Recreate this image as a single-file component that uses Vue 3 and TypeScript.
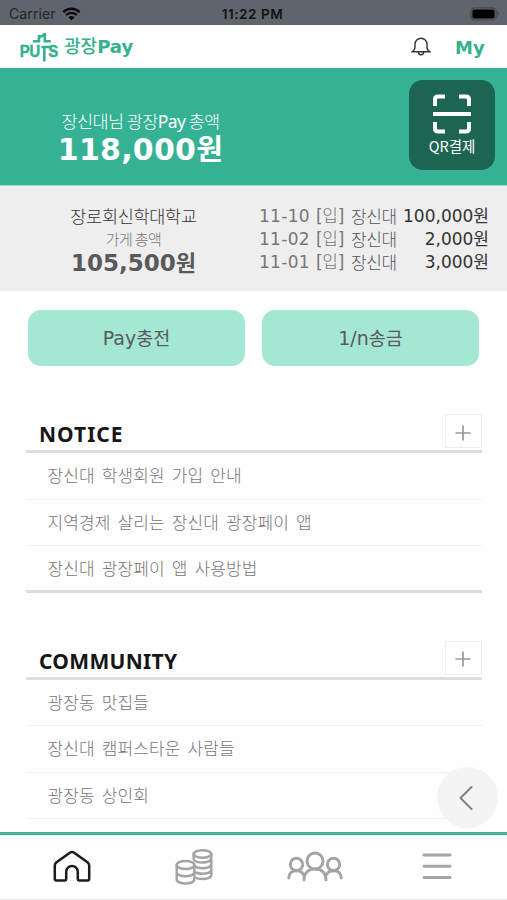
<script setup lang="ts">
interface Transaction {
  date: string
  name: string
  amount: string
}
interface Board {
  id: string
  title: string
  posts: string[]
}

const transactions: Transaction[] = [
  { date: '11-10', name: '장신대', amount: '100,000' },
  { date: '11-02', name: '장신대', amount: '2,000' },
  { date: '11-01', name: '장신대', amount: '3,000' },
]

const boards: Board[] = [
  {
    id: 'notice',
    title: 'NOTICE',
    posts: ['장신대 학생회원 가입 안내', '지역경제 살리는 장신대 광장페이 앱', '장신대 광장페이 앱 사용방법'],
  },
  {
    id: 'community',
    title: 'COMMUNITY',
    posts: ['광장동 맛집들', '장신대 캠퍼스타운 사람들', '광장동 상인회'],
  },
]
</script>

<template>
  <div class="screen">
    <div class="status">
      <div class="carrier">
        <span>Carrier</span>
        <svg width="19" height="14" viewBox="0 0 19 14">
          <path d="M1.4 5.1a11.6 11.6 0 0 1 16.2 0" />
          <path d="M4.1 8a7.8 7.8 0 0 1 10.8 0" />
          <path class="dot" d="M9.5 13.4 6.4 10.2a4.4 4.4 0 0 1 6.2 0z" />
        </svg>
      </div>
      <span class="clock">11:22 PM</span>
      <svg class="battery" width="30" height="14" viewBox="0 0 30 14">
        <rect class="shell" x="0.8" y="0.8" width="25.4" height="12.2" rx="3.8" />
        <rect x="2.4" y="2.4" width="22.2" height="9" rx="2" />
        <path class="tip" d="M27.6 4.8v4.4q1.6-.6 1.6-2.2t-1.6-2.2z" />
      </svg>
    </div>

    <header class="header">
      <svg class="logo" width="40" height="32" viewBox="0 0 40 32">
        <text x="-0.3" y="26" textLength="20.500" lengthAdjust="spacingAndGlyphs">PU</text>
        <text x="28.200" y="26" textLength="10" lengthAdjust="spacingAndGlyphs">S</text>
        <path d="M13 10.200h6V5.400h2.800l2.200-2h.8v6.800h6M24.300 30.500V15.500M21.500 16h8.500" />
      </svg>
      <div class="brand"><span class="brand-ko">광장</span>Pay</div>
      <svg class="bell" width="20" height="20" viewBox="0 0 20 20">
        <path d="M1.200 14.800h17.600q-2.800-1.600-2.800-4.200V7.200a6 6 0 0 0-12 0v3.400q0 2.600-2.800 4.200zM7.300 15a2.700 2.700 0 0 0 5.400 0" />
      </svg>
      <span class="my">My</span>
    </header>

    <section class="hero">
      <div class="hero-text">
        <div class="hero-label">장신대님 광장<span class="lat">Pay</span> 총액</div>
        <div class="hero-amount">118,000<span class="won">원</span></div>
      </div>
      <div class="qr">
        <svg width="38" height="40" viewBox="0 0 38 40">
          <path d="M2 12V5.500Q2 2.500 5 2.500h7M26 2.500h7q3 0 3 3V12M2 28v6.500q0 3 3 3h7M26 37.500h7q3 0 3-3V28M0 20h38" />
        </svg>
        <span>QR결제</span>
      </div>
    </section>

    <section class="store">
      <div class="store-total">
        <div class="store-name">장로회신학대학교</div>
        <div class="store-label">가게 총액</div>
        <div class="store-amount">105,500<span class="won">원</span></div>
      </div>
      <div class="history">
        <div v-for="t in transactions" :key="t.date" class="entry">
          <span class="date">{{ t.date }}</span>
          <span class="kind">[<span class="ko">입</span>]</span>
          <span class="who">{{ t.name }}</span>
          <span class="sum">{{ t.amount }}<span class="won">원</span></span>
        </div>
      </div>
    </section>

    <div class="actions">
      <div class="action">Pay<span class="ko">충전</span></div>
      <div class="action">1/n<span class="ko">송금</span></div>
    </div>

    <section v-for="b in boards" :key="b.id" class="board" :class="b.id">
      <div class="board-head">
        <h2>{{ b.title }}</h2>
        <div class="plus">
          <svg width="16" height="16" viewBox="0 0 16 16"><path d="M8 .5v15M.5 8h15" /></svg>
        </div>
      </div>
      <ul>
        <li v-for="p in b.posts" :key="p">{{ p }}</li>
      </ul>
    </section>

    <nav class="tabs">
      <div class="fab">
        <svg width="14" height="24" viewBox="0 0 14 24"><path d="M12.500 1 1.500 12l11 11" /></svg>
      </div>
      <svg class="home" width="40" height="34" viewBox="0 0 40 34">
        <path d="M18.200 2.600q1.800-1.300 3.600 0L35.500 12.300q1.700 1.300 1.700 3.200v13.300q0 1.700-1.700 1.700H27q-1.200 0-1.200-1.200v-7.500a5.800 5.800 0 0 0-11.600 0v7.500q0 1.200-1.200 1.200H4.500q-1.700 0-1.700-1.700V15.500q0-1.900 1.700-3.200z" />
      </svg>
      <svg class="coins" width="40" height="36" viewBox="0 0 40 36">
        <ellipse cx="28.500" cy="5" rx="8.800" ry="3.800" />
        <path d="M19.700 5v5.500c1 1.800 4.500 3 8.800 3 4.800 0 8.800-1.800 8.800-4M37.300 5v21c0 2.200-4 4-8.800 4q-4.500 0-7.500-1.500M37.300 15.200c0 2.200-4 4-8.800 4q-4.500 0-7.500-1.500M37.300 20.700c0 2.200-4 4-8.800 4q-4 0-7-1.200" />
        <ellipse cx="11.500" cy="16" rx="8.800" ry="4" />
        <path d="M2.700 16v14.500c0 2.200 4 4 8.800 4s8.800-1.800 8.800-4V16M2.700 23.200c0 2.200 4 4 8.800 4s8.800-1.800 8.800-4" />
      </svg>
      <svg class="people" width="56" height="32" viewBox="0 0 56 32">
        <circle cx="28" cy="10" r="8" />
        <circle cx="9.500" cy="13.500" r="6.200" />
        <circle cx="46.500" cy="13.500" r="6.200" />
        <path d="M17 29c0-7 4.500-11 11-11s11 4 11 11M1.800 27c0-4.500 3-7.300 7.700-7.300 3.500 0 6 1.500 7.200 4.300M54.200 27c0-4.500-3-7.300-7.700-7.300-3.500 0-6 1.500-7.200 4.300" />
      </svg>
      <svg class="menu" width="30" height="30" viewBox="0 0 30 30">
        <path d="M2 3h26M2 14.200h26M2 25.500h26" />
      </svg>
    </nav>
  </div>
</template>

<style>
body {
  margin: 0;
  background: #fff;
}
</style>

<style scoped>
* {
  box-sizing: border-box;
}
.screen {
  width: 507px;
  height: 900px;
  overflow: hidden;
  display: flex;
  flex-direction: column;
  background: #fefefe;
  font-family: 'DejaVu Sans', 'Noto Sans CJK KR', sans-serif;
  white-space: nowrap;
}
svg {
  display: block;
  fill: none;
  flex: none;
}
.won,
.ko {
  font-family: 'Noto Sans CJK KR', sans-serif;
  line-height: 1;
}
.status {
  height: 25px;
  background: #60646c;
  display: grid;
  grid-template-columns: 1fr auto 1fr;
  align-items: center;
  padding: 2px 7px 0 9px;
  font: 14px/20px Inter, sans-serif;
  color: #111;
}
.carrier {
  display: flex;
  align-items: center;
  gap: 6px;
  color: #23252a;
  letter-spacing: 0.1px;
}
.carrier svg {
  stroke: #0a0a0a;
  stroke-width: 2.4;
}
.carrier .dot {
  fill: #0a0a0a;
  stroke: none;
}
.clock {
  font-weight: 600;
  font-size: 13.5px;
  letter-spacing: 0.55px;
  position: relative;
  left: -2px;
}
.battery {
  justify-self: end;
  fill: #000;
}
.battery .shell {
  fill: none;
  stroke: #44474d;
  stroke-width: 1.2;
}
.battery .tip {
  fill: #44474d;
}
.header {
  height: 43px;
  display: flex;
  align-items: center;
  padding-left: 20px;
  color: #35b18f;
  background: #fff;
}
.logo {
  stroke: #35b18f;
  stroke-width: 2.6;
}
.logo text {
  font: 700 16px 'Liberation Sans', sans-serif;
  fill: #35b18f;
  stroke-width: 0.5;
}
.brand {
  margin-left: 4px;
  width: 343px;
  font: 700 18px/24px 'DejaVu Sans', sans-serif;
}
.brand-ko {
  font-family: 'Noto Sans CJK KR', sans-serif;
  font-weight: 500;
  line-height: 1;
}
.bell {
  margin-left: 4px;
  stroke: #333;
  stroke-width: 1.4;
}
.my {
  margin-left: 24px;
  padding-top: 2px;
  font: 700 18px/24px 'DejaVu Sans', sans-serif;
}
.hero {
  height: 117px;
  background: #35b193;
  display: flex;
  justify-content: space-between;
  padding: 12px 12px 0 0;
  color: #fff;
}
.hero-text {
  width: 281px;
  padding-top: 29px;
  text-align: center;
}
.hero-label {
  font: 300 17.500px/24px 'Noto Sans CJK KR', sans-serif;
  letter-spacing: -0.6px;
}
.hero-label .lat {
  font-family: 'Noto Sans', sans-serif;
  font-weight: 400;
  line-height: 1;
}
.hero-amount {
  font: 700 30px/30px 'DejaVu Sans', sans-serif;
  letter-spacing: 0.25px;
}
.hero-amount .won {
  font-size: 29px;
}
.qr {
  width: 86px;
  height: 90px;
  border-radius: 14px;
  background: #1c6552;
  display: flex;
  flex-direction: column;
  align-items: center;
  padding-top: 14px;
  font: 400 14.500px/20px 'Noto Sans CJK KR', sans-serif;
}
.qr svg {
  stroke: #fff;
  stroke-width: 4;
  margin-bottom: 2px;
}
.store {
  height: 106px;
  background: #eee;
  border-top: 1px solid #92dfcb;
  display: flex;
  padding: 18px 18px 0 0;
}
.store-total {
  width: 267px;
  text-align: center;
}
.store-name {
  font: 300 17.500px/23px 'Noto Sans CJK KR', sans-serif;
  color: #333;
  letter-spacing: -0.3px;
}
.store-label {
  font: 300 15px/23px 'Noto Sans CJK KR', sans-serif;
  color: #777;
  letter-spacing: -0.6px;
}
.store-amount {
  font: 700 23px/22px 'DejaVu Sans', sans-serif;
  color: #595959;
}
.store-amount .won {
  font-size: 22px;
}
.history {
  flex: 1;
  margin-left: -8px;
  padding-top: 1px;
}
.entry {
  height: 23.200px;
  display: flex;
  align-items: center;
  font-size: 17px;
  line-height: 25px;
  color: #777;
}
.date {
  width: 57px;
  letter-spacing: 0.3px;
}
.kind {
  width: 35px;
  letter-spacing: -0.3px;
}
.kind .ko {
  font-weight: 300;
}
.who {
  font: 300 17px/22px 'Noto Sans CJK KR', sans-serif;
  letter-spacing: -0.4px;
  color: #555;
  padding-bottom: 2px;
}
.sum {
  margin-left: auto;
  color: #333;
}
.actions {
  height: 75px;
  padding: 19px 28px 0;
  display: grid;
  grid-template-columns: 217px 217px;
  gap: 17px;
}
.action {
  height: 56px;
  border-radius: 13px;
  background: #a5e7d5;
  color: #5a5a5a;
  font-size: 19px;
  line-height: 56px;
  text-align: center;
}
.action .ko {
  font-size: 18.500px;
}
.board {
  margin: 48px 25px 0 26px;
}
.board-head {
  height: 39px;
  border-bottom: 3px solid #ddd;
  display: flex;
  align-items: flex-start;
  justify-content: space-between;
  padding-left: 13px;
}
h2 {
  margin: 6px 0 0;
  font: 700 21px/28px 'Noto Sans', sans-serif;
  letter-spacing: 1px;
  color: #161616;
}
.community h2 {
  letter-spacing: 0.300px;
}
.plus {
  width: 37px;
  height: 34px;
  border: 1.500px solid #eee;
  display: flex;
  align-items: center;
  justify-content: center;
  padding: 3px 2px 0 0;
}
.plus svg {
  stroke: #999;
  stroke-width: 1.700;
}
ul {
  list-style: none;
  margin: 0;
  padding: 0;
}
li {
  height: 46.500px;
  padding-left: 21.500px;
  border-bottom: 1.500px solid #f1f1f1;
  font: 300 17px/43px 'Noto Sans CJK KR', sans-serif;
  letter-spacing: 0.120px;
  word-spacing: 3.100px;
  color: #777;
}
.notice li:last-child {
  border-bottom: 3px solid #ddd;
}
.tabs {
  position: relative;
  margin-top: auto;
  height: 68px;
  flex: none;
  border-top: 3px solid #41b394;
  border-bottom: 1px solid #e6e6e6;
  background: #fefefe;
  display: flex;
  align-items: center;
  padding-left: 52px;
  stroke-linecap: round;
  stroke-linejoin: round;
}
.home {
  stroke: #1c1c1c;
  stroke-width: 2.500;
}
.coins {
  margin-left: 82px;
}
.people {
  margin-left: 73px;
}
.menu {
  margin-left: 79px;
}
.coins,
.people,
.menu {
  stroke: #a4a4a4;
  stroke-width: 2.500;
}
.people,
.menu {
  stroke-width: 2.900;
}
.fab {
  position: absolute;
  left: 437px;
  top: -68px;
  width: 61px;
  height: 61px;
  border-radius: 50%;
  background: #f4f4f4;
  display: flex;
  align-items: center;
  justify-content: center;
  padding-right: 3px;
  stroke: #808080;
  stroke-width: 2;
}
</style>
